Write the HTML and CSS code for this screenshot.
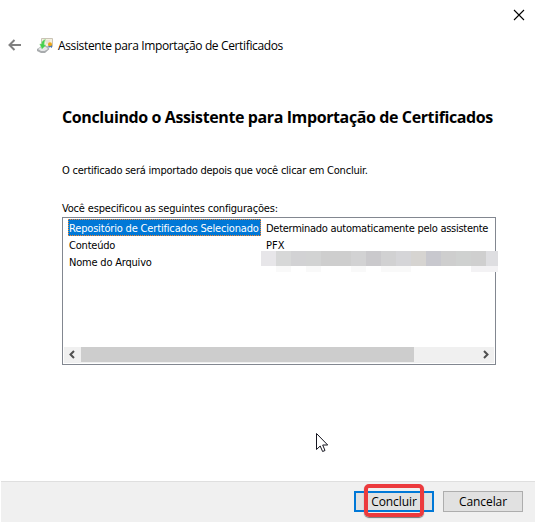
FILE: index.html
```html
<!DOCTYPE html>
<html lang="pt-BR">
<head>
<meta charset="utf-8">
<title>Assistente para Importação de Certificados</title>
<link rel="stylesheet" href="styles.css">
</head>
<body>
<div class="wizard">
  <div class="titlebar">
    <svg class="close" width="12" height="12" viewBox="0 0 12 12"><path d="M1 1L11 11M11 1L1 11"/></svg>
  </div>
  <header class="header">
    <svg class="back" width="14" height="12" viewBox="0 0 14 12"><path d="M13 6H1.5M6.5 1L1.5 6L6.5 11"/></svg>
    <svg class="cert" width="17" height="17" viewBox="0 0 17 17">
      <path d="M4.5 1.5H15.5V9.5H4.5Z" fill="#f5f0df" stroke="#c9c3b5"/>
      <path d="M7 4H13M9 6H13" stroke="#d9d4cc"/>
      <path d="M0 12L4 9.5H10L12.5 12L8 16H4L0 14Z" fill="#a8abad"/>
      <path d="M1 12L4.5 10H9L11 12L7.5 14H4Z" fill="#e5e7e8"/>
      <path d="M8.5 2.5C5.5 3 4.5 5 4.8 7H2.8L5 12L9 8H7.2C7 6 7.5 4 8.5 2.5Z" fill="#43cf4c" stroke="#85df87" stroke-width=".5"/>
      <path d="M11.5 8H15V11L13.2 10L11.5 11Z" fill="#4b78b5"/>
      <circle cx="13" cy="7.3" r="2" fill="#eda719"/>
    </svg>
    <span class="name">Assistente para Importação de Certificados</span>
  </header>
  <main class="content">
    <h1><span>Concluindo o Assistente para Importação de Certificados</span></h1>
    <p class="intro"><span>O certificado será importado depois que você clicar em Concluir.</span></p>
    <p class="label"><span>Você especificou as seguintes configurações:</span></p>
    <div class="list">
      <div class="row"><div class="key selected"><span class="k1">Repositório de Certificados Selecionado</span></div><div class="value"><span class="v1">Determinado automaticamente pelo assistente</span></div></div>
      <div class="row"><div class="key"><span class="k2">Conteúdo</span></div><div class="value"><span class="v2">PFX</span></div></div>
      <div class="row"><div class="key"><span class="k3">Nome do Arquivo</span></div>
        <svg class="redacted" width="237" height="21" viewBox="0 0 237 21" shape-rendering="crispEdges">
          <path fill="#e7e6e9" d="M0 0h15v15H0z"/><path fill="#d7d8d8" d="M15 0h15v15H15z"/>
          <path fill="#d2d2d4" d="M30 0h15v15H30z"/><path fill="#d2d3d3" d="M45 0h15v15H45z"/>
          <path fill="#cecece" d="M60 0h30v15H60z"/><path fill="#d2d2d3" d="M90 0h15v15H90z"/>
          <path fill="#cac9cc" d="M105 0h15v15h-15z"/><path fill="#d1d1d2" d="M120 0h15v15h-15z"/>
          <path fill="#d5d5d8" d="M135 0h15v15h-15z"/><path fill="#d6d4d1" d="M150 0h15v15h-15z"/>
          <path fill="#c8c8ce" d="M165 0h15v15h-15z"/><path fill="#cecece" d="M180 0h15v15h-15z"/>
          <path fill="#cfd1d0" d="M195 0h15v15h-15z"/><path fill="#cfcfcf" d="M210 0h15v15h-15z"/>
          <path fill="#dedee1" d="M225 0h12v15h-12z"/>
          <path fill="#f9f9f9" d="M15 15h15v6H15zM45 15h15v6H45zM90 15h15v6H90zM120 15h30v6h-30z"/>
          <path fill="#f3f2f4" d="M210 15h27v6h-27z"/>
        </svg>
      </div>
      <div class="scrollbar">
        <svg width="17" height="16" viewBox="0 0 17 16"><path d="M10 4L6.5 7.5L10 11"/></svg>
        <div class="track"><div class="thumb"></div></div>
        <svg width="17" height="16" viewBox="0 0 17 16"><path d="M7 4L10.5 7.5L7 11"/></svg>
      </div>
    </div>
  </main>
  <footer class="footer">
    <button class="button primary"><span>Concluir</span></button>
    <button class="button"><span>Cancelar</span></button>
  </footer>
  <div class="highlight"></div>
  <svg class="cursor" width="13" height="20" viewBox="0 0 13 20"><path d="M.5 .5V16.5L4.2 13L6.6 18.5L9 17.5L6.7 12H11.7Z"/></svg>
</div>
</body>
</html>
```

FILE: styles.css
```css
* { box-sizing: border-box; }
body {
  margin: 0;
  background: #fff;
  color: #000;
  font: 11px/17px "DejaVu Sans Condensed", "DejaVu Sans", sans-serif;
  font-stretch: condensed;
  letter-spacing: -0.2px;
}
span { white-space: nowrap; display: inline-block; }
svg { fill: none; flex: none; display: block; }
.wizard {
  position: relative;
  width: 535px;
  height: 523px;
  display: flex;
  flex-direction: column;
  overflow: hidden;
}
.titlebar { height: 30px; padding: 9px 10px 0 0; display: flex; justify-content: flex-end; }
.close { stroke: #000; stroke-width: 1.1; }
.header { height: 30px; padding-left: 8px; display: flex; align-items: center; }
.back { stroke: #808080; stroke-width: 2; }
.cert { margin: 0 4px 0 15px; }
.name { font: 12px/18px "Open Sans", sans-serif; margin-top: 2px; letter-spacing: -0.36px; }
.content { flex: 1; padding: 46px 39px 0 62px; }
h1 { margin: 0; font: bold 16px/22px "Open Sans", sans-serif; letter-spacing: -0.39px; }
p { margin: 0; }
.intro { margin-top: 34px; letter-spacing: -0.23px; }
.label { margin-top: 21px; letter-spacing: -0.18px; }
.list {
  width: 434px;
  height: 148px;
  border: 1px solid #828790;
  padding: 1px;
  display: flex;
  flex-direction: column;
}
.row { display: flex; height: 17px; padding-left: 4px; flex: none; }
.key { width: 193px; padding-left: 1px; flex: none; line-height: 19px; }
.k1, .v1, .k2, .v2, .k3 { line-height: 19px; vertical-align: top; }
.k1 { letter-spacing: -0.17px; }
.selected { background: #0078d7; color: #fff; outline: 1px dotted #ff8728; outline-offset: -1px; }
.value { padding-left: 5px; line-height: 19px; }
.v1 { letter-spacing: -0.27px; }
.v2 { letter-spacing: 0; }
.redacted { margin-top: -2px; }
.scrollbar { margin-top: auto; height: 16px; background: #f0f0f0; display: flex; }
.scrollbar svg { stroke: #505050; stroke-width: 2; }
.track { flex: 1; }
.thumb { width: 333px; height: 15px; background: #cdcdcd; }
.footer {
  height: 41px;
  margin: 0 0 1px 1px;
  padding: 9px 12px 0 0;
  background: #f0f0f0;
  border-top: 1px solid #dfdfdf;
  display: flex;
  justify-content: flex-end;
  gap: 9px;
}
.button {
  width: 80px;
  height: 21px;
  padding: 0;
  border: 1px solid #adadad;
  background: #e1e1e1;
  color: #000;
  font: 12px/17px "Open Sans", sans-serif;
  letter-spacing: -0.1px;
}
.primary { border: 2px solid #0078d7; }
.highlight {
  position: absolute;
  left: 364px;
  top: 484px;
  width: 60px;
  height: 33px;
  border: 4px solid #ec3a3d;
  border-radius: 5px;
  box-shadow: 0 1px 1px #777;
}
.cursor { position: absolute; left: 316px; top: 433px; fill: #fff; stroke: #15151f; }
```
